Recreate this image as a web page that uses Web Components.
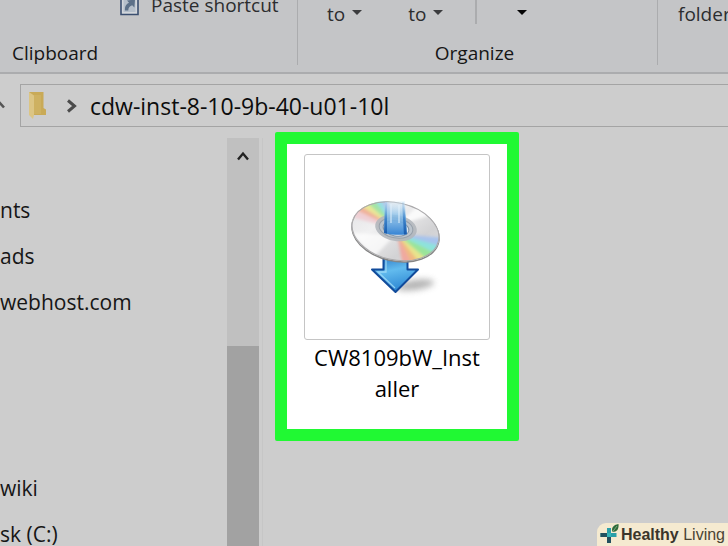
<!DOCTYPE html>
<html lang="en">
<head>
<meta charset="utf-8">
<meta name="viewport" content="width=device-width, initial-scale=1">
<title>cdw-inst-8-10-9b-40-u01-10l</title>
<style>
  :root {
    --ribbon: #c4c5c7;
    --surface: #cdcdcd;
    --line: #abacae;
    --text: #161616;
    --accent: #20f933;
    --size-sm: 19px;
    --size-md: 21px;
    --size-lg: 22px;
    --size-xl: 23px;
  }
  html, body { height: 100%; }
  body {
    margin: 0;
    overflow: hidden;
    background: var(--surface);
    color: var(--text);
    font-family: "Open Sans", "Noto Sans", sans-serif;
    font-size: var(--size-md);
  }
</style>
</head>
<body>
<explorer-window>
  <ribbon-bar slot="ribbon">
    <ribbon-group label="Clipboard">
      <ribbon-button raised icon="shortcut">Paste shortcut</ribbon-button>
    </ribbon-group>
    <ribbon-group label="Organize" centered>
      <ribbon-button menu>to</ribbon-button>
      <ribbon-button menu>to</ribbon-button>
      <ribbon-button menu split name="More"></ribbon-button>
    </ribbon-group>
    <ribbon-group label="">
      <ribbon-button>folder</ribbon-button>
    </ribbon-group>
  </ribbon-bar>
  <address-bar slot="address">cdw-inst-8-10-9b-40-u01-10l</address-bar>
  <nav-pane slot="nav">
    <nav-item>nts</nav-item>
    <nav-item>ads</nav-item>
    <nav-item>webhost.com</nav-item>
    <nav-item apart>wiki</nav-item>
    <nav-item>sk (C:)</nav-item>
  </nav-pane>
  <scroll-track slot="scroll"></scroll-track>
  <file-tile>CW8109bW_Inst<br>aller</file-tile>
</explorer-window>
<brand-badge><b>Healthy</b> Living</brand-badge>

<script>
(() => {
  const define = (name, markup, setup) => {
    const template = document.createElement('template');
    template.innerHTML = markup;
    customElements.define(name, class extends HTMLElement {
      connectedCallback() {
        if (this.shadowRoot) return;
        this.attachShadow({ mode: 'open' }).append(template.content.cloneNode(true));
        if (setup) setup(this, this.shadowRoot);
      }
    });
  };

  define('explorer-window', `
    <style>
      :host { display: flex; flex-direction: column; height: 100vh; overflow: hidden; }
      .body { flex: 1; min-height: 0; display: grid; grid-template-columns: 227px 32px 4px 1fr; }
      .splitter { margin-top: 11px; border-right: 1px solid #c6c6c6; }
      main { padding: 5px 12px; min-width: 0; }
    </style>
    <slot name="ribbon"></slot>
    <slot name="address"></slot>
    <div class="body">
      <slot name="nav"></slot>
      <slot name="scroll"></slot>
      <div class="splitter"></div>
      <main><slot></slot></main>
    </div>
  `);

  define('ribbon-bar', `
    <style>
      :host {
        display: grid; grid-template-columns: 298px 360px 1fr;
        background: var(--ribbon); border-bottom: 2px solid var(--line);
        box-sizing: border-box; height: 74px; overflow: hidden;
      }
    </style>
    <slot></slot>
  `);

  define('ribbon-group', `
    <style>
      :host {
        display: flex; flex-direction: column; justify-content: space-between;
        height: 65px; box-sizing: border-box; min-width: 0;
        border-right: 1px solid var(--line);
      }
      :host(:last-of-type) { border-right: none; }
      .tools { display: flex; align-items: flex-start; padding-left: 20px; }
      :host([centered]) .tools { padding-left: 29px; gap: 46px; }
      .label { padding: 0 12px; line-height: 24px; font-size: var(--size-sm); }
      :host([centered]) .label { text-align: center; padding-right: 18px; }
    </style>
    <div class="tools"><slot></slot></div>
    <div class="label"></div>
  `, (host, root) => {
    root.querySelector('.label').textContent = host.getAttribute('label') ?? '';
  });

  define('ribbon-button', `
    <style>
      :host { display: block; }
      :host([icon]) { margin-left: 100px; }
      button {
        display: flex; align-items: center; gap: 7px;
        padding: 0; border: 0; background: none;
        font: inherit; font-size: var(--size-sm); line-height: 28px;
        color: #2c2d2f; white-space: nowrap;
      }
      :host([raised]) button { line-height: 10px; height: 10px; gap: 12px; }
      :host([split]) button { height: 24px; padding-left: 40px; border-left: 2px solid var(--line); margin-left: -14px; }
      svg { display: none; flex: none; }
      .arrow { fill: #3b3c3e; margin-bottom: 4px; }
      :host([split]) .arrow { margin: 0; fill: #050505; }
      :host([menu]) .arrow, :host([icon]) .doc { display: block; }
    </style>
    <button type="button">
      <svg class="doc" width="19" height="24" viewBox="0 0 19 24">
        <path d="M1 0h17v21.500H1z" fill="#d2d6db" stroke="#3b4f70" stroke-width="1.600"/>
        <path d="M3.500 1h12v18h-12z" fill="#b5bfca"/>
        <path d="M5 17.500c-.5-4 1-6.500 4-7.800L7 7.500l8-1-.6 8-2.200-2.200c-2.300.8-4 2.500-3.900 5.200z" fill="#5c7088"/>
      </svg>
      <slot></slot>
      <svg class="arrow" width="10" height="5" viewBox="0 0 10 5"><path d="M0 0h10L5 5z"/></svg>
    </button>
  `, (host, root) => {
    const name = host.getAttribute('name');
    if (name) root.querySelector('button').setAttribute('aria-label', name);
  });

  define('address-bar', `
    <style>
      :host { display: grid; grid-template-columns: 20px 1fr; padding-top: 10px; }
      .up { width: 8px; align-self: center; }
      .box {
        display: flex; align-items: center; height: 43px; box-sizing: border-box;
        border: 1px solid #a4a4a4; border-right: none; padding-left: 7px;
      }
      .chevron { margin: 0 12px 0 20px; }
      svg { display: block; flex: none; }
      a { color: #0c0c0c; font-size: var(--size-xl); text-decoration: none; white-space: nowrap; }
    </style>
    <svg class="up" width="8" height="10" viewBox="0 0 8 10"><path d="M-3 5L-1 1l5 5.500" fill="none" stroke="#555" stroke-width="2.600"/></svg>
    <div class="box">
      <svg width="18" height="27" viewBox="0 0 18 27">
        <path d="M1 0h14.500v16l2.500 1.500V23H5z" fill="#c9aa57"/>
        <path d="M1 0l5 3.500V23l-1 4-4-4z" fill="#dcc584"/>
        <path d="M6 3h7v19H6z" fill="#d2b568" opacity=".6"/>
      </svg>
      <svg class="chevron" width="12" height="14" viewBox="0 0 12 14"><path d="M2 1.500L8.500 7 2 12.500" fill="none" stroke="#4b4b4b" stroke-width="3"/></svg>
      <a href="#"><slot></slot></a>
    </div>
  `);

  define('nav-pane', `
    <style>
      :host { display: block; padding-top: 60px; overflow: hidden; }
    </style>
    <nav><slot></slot></nav>
  `);

  define('nav-item', `
    <style>
      :host { display: block; line-height: 46px; white-space: nowrap; }
      :host([apart]) { margin-top: 140px; }
      a { color: inherit; text-decoration: none; }
    </style>
    <a href="#"><slot></slot></a>
  `);

  define('scroll-track', `
    <style>
      :host { display: flex; flex-direction: column; margin-top: 11px; background: #c0c0c0; }
      button { display: grid; place-items: center; height: 36px; padding: 0; border: 0; background: none; }
      .thumb { flex: 1; margin-top: 172px; background: #a2a2a2; }
    </style>
    <button type="button" aria-label="Scroll up">
      <svg width="12" height="10" viewBox="0 0 12 10"><path d="M1 8.500L6 2.500l5 6" fill="none" stroke="#222" stroke-width="2.400"/></svg>
    </button>
    <div class="thumb"></div>
  `);

  define('file-tile', `
    <style>
      :host {
        display: flex; flex-direction: column; align-items: center;
        width: 220px; min-height: 275px; padding-top: 10px;
        background: #fff;
        border: 12px solid var(--accent); border-radius: 2px;
      }
      .frame {
        display: grid; place-items: center;
        width: 184px; height: 184px;
        border: 1px solid #c5c5c5; border-radius: 3px;
      }
      .name { margin-top: 2px; font-size: var(--size-lg); line-height: 31px; text-align: center; color: #000; }
    </style>
    <div class="frame"><disc-icon></disc-icon></div>
    <div class="name"><slot></slot></div>
  `);

  // Tilted disc with two rainbow sectors; the arrow drops through its hole.
  define('disc-icon', `
    <style>
      :host { display: block; }
      svg { display: block; }
    </style>
    <svg width="120" height="120" viewBox="2 2 120 120" role="img">
      <defs>
        <linearGradient id="silver" x1="0" y1="0" x2="1" y2="1">
          <stop offset="0" stop-color="#d9d9dc"/><stop offset=".4" stop-color="#f0f0f1"/>
          <stop offset=".65" stop-color="#d2d2d4"/><stop offset="1" stop-color="#e7e7e9"/>
        </linearGradient>
        <linearGradient id="stem" x1="0" y1="0" x2="0" y2="1">
          <stop offset="0" stop-color="#d5eaf8" stop-opacity=".3"/>
          <stop offset=".4" stop-color="#8fc3ea" stop-opacity=".85"/><stop offset="1" stop-color="#2f7fd2"/>
        </linearGradient>
        <linearGradient id="edge" x1="0" y1="0" x2="0" y2="1">
          <stop offset="0" stop-color="#7ab2e0" stop-opacity=".15"/>
          <stop offset=".5" stop-color="#2f78c4" stop-opacity=".8"/><stop offset="1" stop-color="#1757a8"/>
        </linearGradient>
        <linearGradient id="head" x1="0" y1="0" x2=".3" y2="1">
          <stop offset="0" stop-color="#2c78c5"/><stop offset=".45" stop-color="#62bbee"/><stop offset="1" stop-color="#2f89d4"/>
        </linearGradient>
        <clipPath id="disc"><ellipse cx="60.500" cy="46.300" rx="44.500" ry="29" transform="rotate(13 60.500 46.300)"/></clipPath>
        <clipPath id="hole"><path d="M40 5h42v40c-5 7-34 6-42-1z"/></clipPath>
        <filter id="soft" x="-20%" y="-20%" width="140%" height="140%"><feGaussianBlur stdDeviation="1.800"/></filter>
        <filter id="haze" x="-50%" y="-100%" width="200%" height="300%"><feGaussianBlur stdDeviation="3"/></filter>
      </defs>
      <ellipse cx="80" cy="100" rx="19" ry="5" fill="#8a8a8a" opacity=".65" filter="url(#haze)" transform="rotate(-8 80 100)"/>
      <path d="M48.500 73h24v11.500H83L60.500 107 37 84.500h11.500z" fill="url(#head)" stroke="#114b9b" stroke-width="2" stroke-linejoin="round"/>
      <path d="M51 75v12h-8l17 16" fill="none" stroke="#a6def9" stroke-width="1.300" opacity=".8"/>
      <ellipse cx="60.500" cy="47.300" rx="45" ry="29.500" transform="rotate(13 60.500 47.300)" fill="#858585"/>
      <g clip-path="url(#disc)">
        <rect width="120" height="90" fill="url(#silver)"/>
        <g filter="url(#soft)">
          <path d="M61 44L9 30l5-10z" fill="#efcfd4"/>
          <path d="M61 44L13 21l9-5z" fill="#f0b199"/>
          <path d="M61 44L20 17l8-5z" fill="#eae797"/>
          <path d="M61 44L27 13l9-4z" fill="#a4e4a5"/>
          <path d="M61 44L35 9l7-3z" fill="#96e0e4"/>
          <path d="M61 44L41 6l8-3z" fill="#b4c8ea"/>
          <path d="M62 49l6 33 12 2z" fill="#f0a99f"/>
          <path d="M62 49l17 34 9-3z" fill="#f1b982"/>
          <path d="M62 49l25 32 8-5z" fill="#e8e48c"/>
          <path d="M62 49l32 27 9-7z" fill="#9ae49a"/>
          <path d="M62 49l40 20 8-8z" fill="#8de3dc"/>
          <path d="M62 49l47 13 3-9z" fill="#a7c3ed"/>
          <path d="M62 40l26-24 15 12z" fill="#fafafa"/>
          <path d="M60 50L17 48l22 24z" fill="#fff" opacity=".7"/>
        </g>
      </g>
      <ellipse cx="60.500" cy="46.300" rx="44" ry="28.500" transform="rotate(13 60.500 46.300)" fill="none" stroke="#aaa9ab" stroke-width="1"/>
      <ellipse cx="61" cy="43" rx="21" ry="13" transform="rotate(10 61 43)" fill="#b3b7bc" opacity=".9"/>
      <ellipse cx="61" cy="43" rx="17" ry="10" transform="rotate(10 61 43)" fill="#bcc4cc" stroke="#97a0aa" stroke-width="1"/>
      <ellipse cx="61" cy="43.500" rx="13" ry="7.500" transform="rotate(10 61 43.500)" fill="#dce5ec" stroke="#8294a8" stroke-width="1"/>
      <g clip-path="url(#hole)">
        <path d="M50 17l20-1 2 35H49z" fill="url(#stem)"/>
        <path d="M50 17h2v34h-3zM67 17h2l3 34h-3z" fill="url(#edge)"/>
        <path d="M56 19v19M64 20v18" stroke="#e3f2fc" stroke-width="2" opacity=".5"/>
      </g>
    </svg>
  `);

  define('brand-badge', `
    <style>
      :host {
        position: fixed; right: 0; bottom: 0;
        display: flex; align-items: center; gap: 2px;
        height: 23px; padding: 0 3px;
        background: #f5ead0; border-top-left-radius: 9px;
        font-family: "Liberation Sans", Arial, sans-serif; font-size: 16px;
        color: #4a4434; white-space: nowrap;
      }
      svg { flex: none; }
      ::slotted(b) { color: #3a352b; }
    </style>
    <svg width="19" height="21" viewBox="0 0 19 21">
      <path d="M7 4h4v5h5.500v4H11v6H7v-6H.5V9H7z" fill="#2a9fa8"/>
      <path d="M7 9v4H.5V9zM7 13h4v6H7z" fill="#23505f"/>
      <path d="M7 9h4v4H7z" fill="#35b4b8"/>
      <path d="M12.500 8C11 4 13 1 18.500 0c.5 5-1.500 8-6 8z" fill="#2e6b3a"/>
      <path d="M12.500 8L17 2" stroke="#9fc49a" stroke-width=".7"/>
    </svg>
    <span><slot></slot></span>
  `);
})();
</script>
</body>
</html>
